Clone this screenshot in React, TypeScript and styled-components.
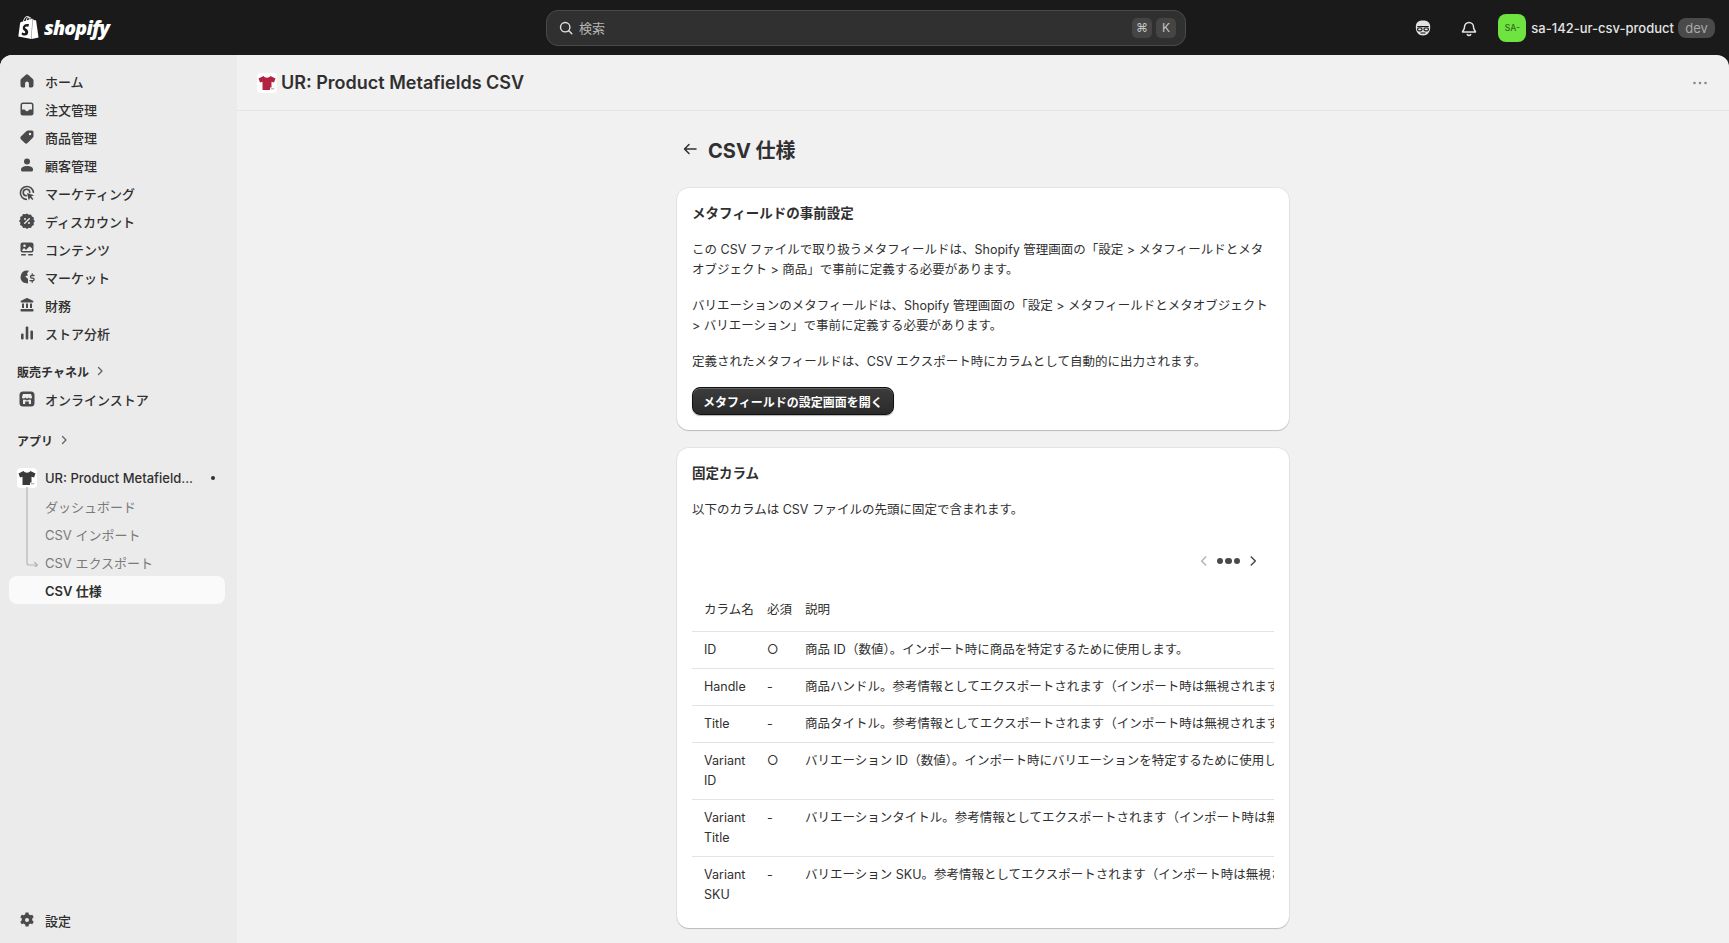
import React from "react";
import styled, { createGlobalStyle } from "styled-components";
import { SiShopify } from "react-icons/si";

const Global = createGlobalStyle`
  html, body { margin: 0; height: 100%; overflow: hidden; background: #1a1a1a; }
  body { font-family: Inter, "Noto Sans CJK JP", sans-serif; font-size: 13px; color: #303030; }
  * { box-sizing: border-box; }
`;

const Page = styled.div`height: 100vh; display: flex; flex-direction: column; overflow: hidden;`;
const TopBar = styled.header`
  height: 55px; flex: none; background: #1a1a1a; display: grid;
  grid-template-columns: 1fr 640px 1fr; align-items: center; padding: 0 14px 0 17px;
`;
const Logo = styled.div`display: flex; align-items: center; gap: 4px; color: #fff;`;
const Word = styled.span`
  font: italic 800 19.5px "Open Sans", sans-serif; letter-spacing: -0.8px; color: #fff; line-height: 24px;
`;
const Search = styled.div`
  height: 36px; background: #303030; border: 1px solid #4a4a4a; border-radius: 12px;
  display: flex; align-items: center; padding: 0 9px 0 12px; color: #b5b5b5;
`;
const SearchLabel = styled.span`margin-left: 6px; flex: 1; font-size: 13px;`;
const Kbd = styled.span`
  width: 20px; height: 20px; margin-left: 4px; border-radius: 5px; background: #454545; color: #c4c4c4;
  display: flex; align-items: center; justify-content: center; font-size: 12px;
`;
const TopRight = styled.div`display: flex; align-items: center; justify-content: flex-end;`;
const TopIcon = styled.span<{ $mr: number }>`display: flex; margin-right: ${(p) => p.$mr}px; color: #e3e3e3;`;
const Avatar = styled.span`
  width: 28px; height: 28px; border-radius: 8px; background: #6fe33f; color: #2e6b22; font-size: 8.5px; font-weight: 500;
  display: flex; align-items: center; justify-content: center;
`;
const StoreName = styled.span`margin-left: 5px; color: #e3e3e3; font-weight: 450; font-size: 13px;`;
const Dev = styled.span`
  margin-left: 4px; width: 37px; height: 20px; border-radius: 8px; background: #4a4a4a; color: #a8a8a8;
  display: flex; align-items: center; justify-content: center; font-size: 13px;
`;

const Shell = styled.div`
  flex: 1; min-height: 0; display: grid; grid-template-columns: 237px 1fr;
  border-radius: 12px 12px 0 0; overflow: hidden; background: #f1f1f1;
`;
const Sidebar = styled.nav`
  background: #ebebeb; padding: 12px 12px 9px 9px; display: flex; flex-direction: column;
`;
const NavRow = styled.div<{ $active?: boolean; $sub?: boolean }>`
  height: 28px; flex: none; display: flex; align-items: center; gap: 8px; padding: 0 8px; border-radius: 8px;
  font-size: 13px; font-weight: ${(p) => (p.$sub && !p.$active ? 400 : p.$active ? 600 : 500)};
  color: ${(p) => (p.$sub && !p.$active ? "#7a7a7a" : "#303030")};
  background: ${(p) => (p.$active ? "#fafafa" : "transparent")};
  padding-left: ${(p) => (p.$sub ? "36px" : "8px")};
  svg { flex: none; color: #4a4a4a; }
`;
const Section = styled.div<{ $mt: number }>`
  height: 28px; flex: none; margin-top: ${(p) => p.$mt}px; padding-left: 8px; display: flex; align-items: center; gap: 5px;
  font-size: 12px; font-weight: 600; color: #303030;
  svg { color: #616161; }
`;
const Tree = styled.div`position: relative; margin-top: 10px; flex: none;`;
const Connector = styled.svg`position: absolute; left: 17px; top: 23px; color: #b5b5b5;`;
const AppName = styled.span`flex: 1;`;
const Dot = styled.span`width: 4px; height: 4px; border-radius: 50%; background: #303030; margin-right: 2px;`;
const Settings = styled(NavRow)`margin-top: auto;`;
const Tile = styled.svg`display: block; flex: none;`;

const Main = styled.main`min-width: 0; overflow: hidden;`;
const AppHeader = styled.div`
  height: 56px; border-bottom: 1px solid #e6e6e6; display: flex; align-items: center; gap: 4px;
  padding: 0 21px 0 20px;
`;
const AppTitle = styled.h1`margin: 0; flex: 1; font-size: 18px; font-weight: 600; color: #303030;`;
const More = styled.span`display: flex; color: #8a8a8a;`;
const Column = styled.div`width: 612px; margin: 0 auto; padding-top: 23px;`;
const PageHead = styled.div`height: 30px; display: flex; align-items: center; gap: 8px; margin-bottom: 24px; padding-left: 3px;`;
const PageTitle = styled.h2`margin: 0; font-size: 20px; font-weight: 650; color: #303030;`;
const Card = styled.section`
  background: #fff; border-radius: 12px; padding: 16px 15px 15px; margin-bottom: 18px;
  box-shadow: 0 0 0 1px rgba(0,0,0,0.05), 0 1px 1px rgba(0,0,0,0.18);
`;
const CardTitle = styled.h3`margin: 0 0 18px; font-size: 13.5px; line-height: 18px; font-weight: 650; color: #303030;`;
const Para = styled.p`margin: 0 0 16px; font-size: 12.5px; line-height: 20px; color: #303030;`;
const Button = styled.button`
  display: block; height: 28px; width: 202px; margin-top: -1px; padding: 0; border-radius: 8px; border: 1px solid #111;
  background: linear-gradient(#3c3c3c, #2a2a2a); color: #fff; font: 600 12px Inter, "Noto Sans CJK JP", sans-serif;
  box-shadow: inset 0 1px 0 rgba(255,255,255,.2), 0 1px 1px rgba(0,0,0,.3);
`;
const Pager = styled.div`
  height: 20px; margin: 31px 0 21px; padding-right: 14px; display: flex; justify-content: flex-end; align-items: center; gap: 6px;
`;
const Dots = styled.span`display: flex; gap: 2px;`;
const PDot = styled.i`width: 6.5px; height: 6.5px; border-radius: 50%; background: #4a4a4a; display: block;`;
const TableWrap = styled.div`width: 582px; overflow: hidden;`;
const Table = styled.table`border-collapse: collapse; table-layout: fixed; width: 1000px; font-size: 12.5px; line-height: 20px;`;
const Th = styled.th<{ $w: number; $first?: boolean }>`
  width: ${(p) => p.$w}px; text-align: left; font-weight: 400; color: #303030; white-space: nowrap;
  padding: 8px 6px 11px ${(p) => (p.$first ? 12 : 6)}px; border-bottom: 1px solid #e3e3e3;
`;
const Td = styled.td<{ $first?: boolean; $nowrap?: boolean }>`
  vertical-align: top; padding: 8px 6px 8px ${(p) => (p.$first ? 12 : 6)}px; color: #303030;
  white-space: ${(p) => (p.$nowrap ? "nowrap" : "normal")};
`;
const Tr = styled.tr`& + & td { border-top: 1px solid #e3e3e3; }`;

type IP = { size?: number };
const I = ({ children, size = 20 }: React.PropsWithChildren<IP>) => (
  <svg width={size} height={size} viewBox="0 0 20 20" fill="currentColor">{children}</svg>
);
const HomeI = () => <I><path d="M8.6 3.9a2 2 0 0 1 2.8 0l4.2 3.8c.5.4.9 1 .9 1.6v5.2a2 2 0 0 1-2 2h-1.7a.9.9 0 0 1-.9-.9v-3.1a1.9 1.9 0 0 0-3.8 0v3.1a.9.9 0 0 1-.9.9H5.5a2 2 0 0 1-2-2V9.3c0-.6.3-1.2.8-1.6z" /></I>;
const OrdersI = () => <I><path fillRule="evenodd" d="M6 3.5h8A2.5 2.5 0 0 1 16.5 6v8a2.5 2.5 0 0 1-2.5 2.5H6A2.5 2.5 0 0 1 3.5 14V6A2.5 2.5 0 0 1 6 3.5zM5 6v4.5h2.2c.6 0 1 .3 1.2.8.3.5.8.9 1.6.9s1.3-.4 1.6-.9c.2-.5.6-.8 1.2-.8H15V6a1 1 0 0 0-1-1H6a1 1 0 0 0-1 1z" /></I>;
const TagI = () => <I><path fillRule="evenodd" d="M11 3.5h4a1.5 1.5 0 0 1 1.5 1.5v4a2.4 2.4 0 0 1-.7 1.7l-5.3 5.4a1.9 1.9 0 0 1-2.7 0l-3.9-3.9a1.9 1.9 0 0 1 0-2.7l5.4-5.3a2.4 2.4 0 0 1 1.7-.7zm2 2.3a1.2 1.2 0 1 0 0 2.4 1.2 1.2 0 0 0 0-2.4z" /></I>;
const PersonI = () => <I><circle cx="10" cy="6.5" r="3" /><path d="M4 14.3c0-2 2.3-3.3 6-3.3s6 1.3 6 3.3V15a1.5 1.5 0 0 1-1.5 1.5h-9A1.5 1.5 0 0 1 4 15z" /></I>;
const TargetI = () => <I><path d="M9.3 16.4a6.5 6.5 0 1 1 7.1-7.1" fill="none" stroke="currentColor" strokeWidth="1.6" strokeLinecap="round" /><path d="M9.4 12.8a3.3 3.3 0 1 1 3.4-3.4" fill="none" stroke="currentColor" strokeWidth="1.6" strokeLinecap="round" /><path d="M10 10l7 2.3-2.8 1.3 2.2 2.4-1 1-2.3-2.3-1.3 2.8z" /></I>;
const DiscountI = () => <I><path d="M10 2.5l1.8 1.3 2.2-.2.9 2 2 1-.3 2.2L18 10l-1.4 1.7.3 2.2-2 1-.9 2-2.2-.2L10 18l-1.8-1.3-2.2.2-.9-2-2-1 .3-2.2L2 10l1.4-1.7-.3-2.2 2-1 .9-2 2.2.2z" /><path d="M12.3 7.7l-4.6 4.6" stroke="#ebebeb" strokeWidth="1.4" strokeLinecap="round" /><circle cx="8" cy="8" r="1" fill="#ebebeb" /><circle cx="12" cy="12" r="1" fill="#ebebeb" /></I>;
const ContentI = () => <I><path fillRule="evenodd" d="M5.5 3.5h9a2 2 0 0 1 2 2v6a2 2 0 0 1-2 2h-9a2 2 0 0 1-2-2v-6a2 2 0 0 1 2-2zM5 11.2c0 .5.3.8.8.8h8.4c.5 0 .8-.3.8-.8V9.5l-1.8-1.7a.8.8 0 0 0-1.1 0L9 11 7.6 9.6a.8.8 0 0 0-1.1 0zM7.5 5.5a1.3 1.3 0 1 0 0 2.6 1.3 1.3 0 0 0 0-2.6z" /><rect x="4" y="15" width="5" height="1.5" rx=".7" /><rect x="11" y="15" width="5" height="1.5" rx=".7" /></I>;
const MarketI = () => <I><path fillRule="evenodd" d="M10 3.5a6.5 6.5 0 0 1 2 .3L10 6.5l1 2-2.5.5.5 3-1.5 1.5.5 2.5a6.5 6.5 0 0 1-1-.3A6.5 6.5 0 0 1 10 3.5z" /><path d="M11 16.5a6.5 6.5 0 0 1-3-.8L5 12l4-2 2 2z" /><path d="M17 8.5h-2.2a1.2 1.2 0 0 0 0 2.6h1a1.2 1.2 0 0 1 0 2.6H13M15.2 7v1.5M15.2 13.7v1.6" fill="none" stroke="currentColor" strokeWidth="1.3" strokeLinecap="round" /></I>;
const BankI = () => <I><path d="M9.2 3.2a2 2 0 0 1 1.6 0l5.2 2.6c.7.4.5 1.7-.4 1.7H4.4c-.9 0-1.1-1.3-.4-1.7z" /><rect x="5" y="8.5" width="2" height="4.5" /><rect x="9" y="8.5" width="2" height="4.5" /><rect x="13" y="8.5" width="2" height="4.5" /><rect x="3.5" y="14" width="13" height="2.5" rx=".8" /></I>;
const ChartI = () => <I><rect x="4" y="10.5" width="2.6" height="6" rx="1" /><rect x="8.7" y="3.5" width="2.6" height="13" rx="1" /><rect x="13.4" y="7.5" width="2.6" height="9" rx="1" /></I>;
const StoreI = () => <I><path fillRule="evenodd" d="M6 2.5h8A3.5 3.5 0 0 1 17.5 6v8a3.5 3.5 0 0 1-3.5 3.5H6A3.5 3.5 0 0 1 2.5 14V6A3.5 3.5 0 0 1 6 2.5zM6 5l-1 3c0 1 .6 1.6 1.5 1.6.8 0 1.3-.4 1.7-1 .4.6 1 1 1.8 1s1.4-.4 1.8-1c.4.6.9 1 1.7 1 .9 0 1.5-.6 1.5-1.6L14 5zm0 5.8V15h2.2v-2.5h3.6V15H14v-4.2c-.8.1-1.5 0-2-.4a3 3 0 0 1-4 0c-.5.4-1.2.5-2 .4z" /></I>;
const GearI = () => <I><path fillRule="evenodd" d="M8.6 2.5h2.8l.5 2a5.5 5.5 0 0 1 1.4.8l2-.6 1.4 2.5-1.5 1.4a5.5 5.5 0 0 1 0 1.7l1.5 1.4-1.4 2.5-2-.6a5.5 5.5 0 0 1-1.4.8l-.5 2H8.6l-.5-2a5.5 5.5 0 0 1-1.4-.8l-2 .6-1.4-2.5 1.5-1.4a5.5 5.5 0 0 1 0-1.7L3.3 7.2l1.4-2.5 2 .6a5.5 5.5 0 0 1 1.4-.8zM10 8a2 2 0 1 0 0 4 2 2 0 0 0 0-4z" /></I>;
const Chev = ({ dir = "r", color = "currentColor", size = 12 }: { dir?: "l" | "r"; color?: string; size?: number }) => (
  <svg width={size} height={size} viewBox="0 0 12 12" fill="none" stroke={color} strokeWidth="1.3" strokeLinecap="round" strokeLinejoin="round">
    <path d={dir === "r" ? "M4.5 2.5L8 6l-3.5 3.5" : "M7.5 2.5L4 6l3.5 3.5"} />
  </svg>
);
const Shirt = ({ size = 20, color }: { size?: number; color: string }) => (
  <Tile width={size} height={size} viewBox="0 0 20 20">
    <rect width="20" height="20" rx="4" fill="#fff" />
    <path fill={color} d="M6.5 3L1.5 5.5 3 9.5l2.5-.7V17h9V8.8l2.5.7 1.5-4L13.5 3c-.8 1.2-2 1.7-3.5 1.7S7.300 4.200 6.500 3z" />
    <rect x="13" y="14.500" width="5" height="2.500" fill="#fff" />
    <rect x="13.800" y="15.300" width="3.400" height="1" fill="#9a9a9a" />
  </Tile>
);

const items: [React.ReactNode, string][] = [
  [<HomeI />, "ホーム"], [<OrdersI />, "注文管理"], [<TagI />, "商品管理"], [<PersonI />, "顧客管理"],
  [<TargetI />, "マーケティング"], [<DiscountI />, "ディスカウント"], [<ContentI />, "コンテンツ"],
  [<MarketI />, "マーケット"], [<BankI />, "財務"], [<ChartI />, "ストア分析"],
];

const rows: [string, string, string][] = [
  ["ID", "○", "商品 ID（数値）。インポート時に商品を特定するために使用します。"],
  ["Handle", "-", "商品ハンドル。参考情報としてエクスポートされます（インポート時は無視されます）。"],
  ["Title", "-", "商品タイトル。参考情報としてエクスポートされます（インポート時は無視されます）。"],
  ["Variant ID", "○", "バリエーション ID（数値）。インポート時にバリエーションを特定するために使用します。"],
  ["Variant Title", "-", "バリエーションタイトル。参考情報としてエクスポートされます（インポート時は無視されます）。"],
  ["Variant SKU", "-", "バリエーション SKU。参考情報としてエクスポートされます（インポート時は無視されます）。"],
];

export default function App() {
  return (
    <Page>
      <Global />
      <TopBar>
        <Logo>
          <SiShopify size={23} />
          <Word>shopify</Word>
        </Logo>
        <Search>
          <svg width="14" height="14" viewBox="0 0 14 14" fill="none" stroke="#e3e3e3" strokeWidth="1.4" strokeLinecap="round"><circle cx="6.200" cy="6.200" r="4.700" /><path d="M9.800 9.800l3 3" /></svg>
          <SearchLabel>検索</SearchLabel>
          <Kbd>⌘</Kbd>
          <Kbd>K</Kbd>
        </Search>
        <TopRight>
          <TopIcon $mr={28}>
            <svg width="18" height="18" viewBox="0 0 18 18" fill="none">
              <path fill="#e3e3e3" d="M9 1.500c4.200 0 7.200 1.500 7.200 6.500 0 5.500-3 8.500-7.200 8.500S1.800 13.500 1.800 8c0-5 3-6.500 7.200-6.500z" />
              <path fill="#1a1a1a" d="M3.300 7h11.400v1.200H3.300z" />
              <rect x="3.600" y="9" width="4.400" height="2.800" rx="1.200" fill="none" stroke="#1a1a1a" strokeWidth="1.200" />
              <rect x="10" y="9" width="4.400" height="2.800" rx="1.200" fill="none" stroke="#1a1a1a" strokeWidth="1.200" />
              <path stroke="#1a1a1a" strokeWidth="1.100" d="M6.500 14h5" />
            </svg>
          </TopIcon>
          <TopIcon $mr={20}>
            <svg width="18" height="18" viewBox="0 0 18 18" fill="none" stroke="#e3e3e3" strokeWidth="1.500" strokeLinejoin="round" strokeLinecap="round">
              <path d="M4.500 8a4.500 4.500 0 0 1 9 0c0 2.500 1.800 4 2 5H2.500c.2-1 2-2.500 2-5z" />
              <path d="M7.300 15.500c.4.600 1 .9 1.700.9s1.300-.3 1.700-.9" />
            </svg>
          </TopIcon>
          <Avatar>SA-</Avatar>
          <StoreName>sa-142-ur-csv-product</StoreName>
          <Dev>dev</Dev>
        </TopRight>
      </TopBar>
      <Shell>
        <Sidebar>
          {items.map(([icon, label]) => (
            <NavRow key={label}>{icon}<span>{label}</span></NavRow>
          ))}
          <Section $mt={10}>販売チャネル <Chev /></Section>
          <NavRow><StoreI /><span>オンラインストア</span></NavRow>
          <Section $mt={13}>アプリ <Chev /></Section>
          <Tree>
            <Connector width="20" height="80" viewBox="0 0 20 80" fill="none" stroke="currentColor" strokeWidth="1.200" strokeLinecap="round" strokeLinejoin="round">
              <path d="M1 0v76a2 2 0 0 0 2 2h8M8.500 75.500l3 2.500-3 2.500" />
            </Connector>
            <NavRow><Shirt color="#3a3a3a" /><AppName>UR: Product Metafield...</AppName><Dot /></NavRow>
            <NavRow $sub>ダッシュボード</NavRow>
            <NavRow $sub>CSV インポート</NavRow>
            <NavRow $sub>CSV エクスポート</NavRow>
            <NavRow $sub $active>CSV 仕様</NavRow>
          </Tree>
          <Settings><GearI /><span>設定</span></Settings>
        </Sidebar>
        <Main>
          <AppHeader>
            <Shirt color="#b3223f" />
            <AppTitle>UR: Product Metafields CSV</AppTitle>
            <More>
              <svg width="16" height="16" viewBox="0 0 16 16" fill="currentColor"><circle cx="2.500" cy="8" r="1.300" /><circle cx="8" cy="8" r="1.300" /><circle cx="13.500" cy="8" r="1.300" /></svg>
            </More>
          </AppHeader>
          <Column>
            <PageHead>
              <svg width="20" height="20" viewBox="0 0 20 20" fill="none" stroke="#303030" strokeWidth="1.500" strokeLinecap="round" strokeLinejoin="round"><path d="M16 10H4.500M9 5.500L4.500 10 9 14.500" /></svg>
              <PageTitle>CSV 仕様</PageTitle>
            </PageHead>
            <Card>
              <CardTitle>メタフィールドの事前設定</CardTitle>
              <Para>この CSV ファイルで取り扱うメタフィールドは、Shopify 管理画面の「設定 &gt; メタフィールドとメタオブジェクト &gt; 商品」で事前に定義する必要があります。</Para>
              <Para>バリエーションのメタフィールドは、Shopify 管理画面の「設定 &gt; メタフィールドとメタオブジェクト &gt; バリエーション」で事前に定義する必要があります。</Para>
              <Para>定義されたメタフィールドは、CSV エクスポート時にカラムとして自動的に出力されます。</Para>
              <Button>メタフィールドの設定画面を開く</Button>
            </Card>
            <Card>
              <CardTitle>固定カラム</CardTitle>
              <Para>以下のカラムは CSV ファイルの先頭に固定で含まれます。</Para>
              <Pager>
                <Chev dir="l" color="#b5b5b5" size={14} />
                <Dots><PDot /><PDot /><PDot /></Dots>
                <Chev color="#4a4a4a" size={14} />
              </Pager>
              <TableWrap>
                <Table>
                  <thead>
                    <tr>
                      <Th $w={69} $first>カラム名</Th>
                      <Th $w={38}>必須</Th>
                      <Th $w={893}>説明</Th>
                    </tr>
                  </thead>
                  <tbody>
                    {rows.map(([a, b, c]) => (
                      <Tr key={a}>
                        <Td $first>{a}</Td>
                        <Td>{b}</Td>
                        <Td $nowrap>{c}</Td>
                      </Tr>
                    ))}
                  </tbody>
                </Table>
              </TableWrap>
            </Card>
          </Column>
        </Main>
      </Shell>
    </Page>
  );
}
